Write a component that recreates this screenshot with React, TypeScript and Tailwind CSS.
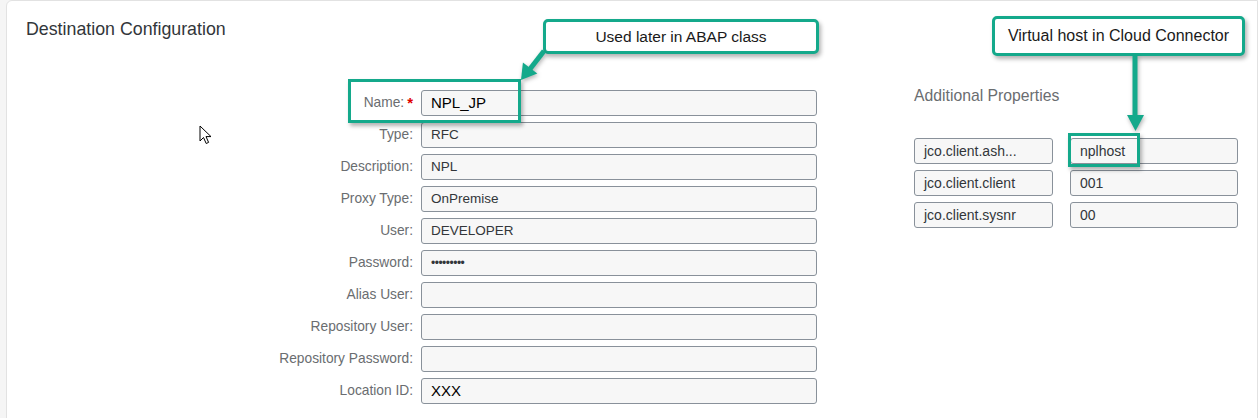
import React from "react";

type Field = {
  label: string;
  value?: string;
  required?: boolean;
  strong?: boolean;
  password?: boolean;
};

const fields: Field[] = [
  { label: "Name:", value: "NPL_JP", required: true, strong: true },
  { label: "Type:", value: "RFC" },
  { label: "Description:", value: "NPL" },
  { label: "Proxy Type:", value: "OnPremise" },
  { label: "User:", value: "DEVELOPER" },
  { label: "Password:", value: "•••••••••", password: true },
  { label: "Alias User:" },
  { label: "Repository User:" },
  { label: "Repository Password:" },
  { label: "Location ID:", value: "XXX", strong: true },
];

const props = [
  { key: "jco.client.ash...", value: "nplhost" },
  { key: "jco.client.client", value: "001" },
  { key: "jco.client.sysnr", value: "00" },
];

const font = { fontFamily: '"Liberation Sans", Arial, sans-serif' };

function Input({ field }: { field: Field }) {
  let textClass = "text-[13.5px] text-[#32363a]";
  if (field.strong) textClass = "text-[15px] text-black";
  if (field.password) textClass = "text-[12px] text-[#32363a] tracking-[-0.5px]";

  return (
    <div className="flex h-[26px] items-center rounded-[3px] border border-[#89919a] bg-[#f7f7f7] px-[9px]">
      <span className={textClass}>{field.value}</span>
    </div>
  );
}

export default function App() {
  return (
    <div
      className="relative h-[418px] w-[1258px] overflow-hidden bg-[#f5f5f5] pl-[6px]"
      style={font}
    >
      {/* Card */}

      <div className="h-[440px] rounded-tl-[6px] border border-[#e2e2e2] bg-white pl-[19px] pt-[16px]">
        <h1 className="text-[17.8px] leading-6 text-[#32363a]">
          Destination Configuration
        </h1>

        <div className="mt-[45px] flex items-start">
          {/* Form */}

          <div className="mt-1 grid grid-cols-[387px_396px] gap-x-2 gap-y-[6px]">
            {fields.map((f) => (
              <React.Fragment key={f.label}>
                <div className="flex h-[26px] items-center justify-end pt-px text-[13.75px] text-[#6a6d70]">
                  {f.label}
                  {f.required && (
                    <span className="ml-[3px] text-[15px] font-bold text-[#e00000]">
                      *
                    </span>
                  )}
                </div>
                <Input field={f} />
              </React.Fragment>
            ))}
          </div>

          {/* Additional properties */}

          <div className="ml-[97px]">
            <h2 className="h-5 text-[15.75px] leading-5 text-[#6a6d70]">
              Additional Properties
            </h2>

            <div className="mt-[32px] grid grid-cols-[139px_168px] gap-x-[17px] gap-y-[6px]">
              {props.map((p) => (
                <React.Fragment key={p.key}>
                  <div className="flex h-[26px] items-center rounded-[3px] border border-[#89919a] bg-[#f7f7f7] px-[9px] text-[14px] text-[#32363a]">
                    {p.key}
                  </div>
                  <div className="flex h-[26px] items-center rounded-[3px] border border-[#89919a] bg-[#f7f7f7] px-[9px] text-[14px] text-[#32363a]">
                    {p.value}
                  </div>
                </React.Fragment>
              ))}
            </div>
          </div>
        </div>
      </div>

      {/* Annotations */}

      <div className="absolute left-[543px] top-[19px] flex h-[35px] w-[276px] items-center justify-center rounded-[5px] border-[3px] border-[#14a98b] bg-white text-[15.5px] text-[#1a1a1a] shadow-[2px_3px_4px_rgba(0,0,0,0.3)]">
        Used later in ABAP class
      </div>

      <div className="absolute left-[992px] top-[16px] flex h-[40px] w-[253px] items-center justify-center rounded-[5px] border-[3px] border-[#14a98b] bg-white text-[16px] text-[#1a1a1a] shadow-[2px_3px_4px_rgba(0,0,0,0.3)]">
        Virtual host in Cloud Connector
      </div>

      <div className="absolute left-[348px] top-[79px] h-[44px] w-[173px] border-[3px] border-[#14a98b] shadow-[2px_3px_4px_rgba(0,0,0,0.3)]" />

      <div className="absolute left-[1068px] top-[133px] h-[34px] w-[72px] border-[3px] border-[#14a98b] shadow-[2px_3px_4px_rgba(0,0,0,0.3)]" />

      <svg
        className="pointer-events-none absolute left-0 top-0"
        width="1258"
        height="418"
        style={{ filter: "drop-shadow(1px 2px 2px rgba(0,0,0,0.3))" }}
      >
        <line x1="544" y1="51" x2="530" y2="69" stroke="#14a98b" strokeWidth="5" />
        <polygon points="521,80 537.3,73.6 522.9,62.6" fill="#14a98b" />
        <line x1="1135" y1="56" x2="1135" y2="116" stroke="#14a98b" strokeWidth="5" />
        <polygon points="1127,115 1144,115 1135.5,131" fill="#14a98b" />
      </svg>

      {/* Mouse cursor */}

      <svg
        className="pointer-events-none absolute left-[199px] top-[125px]"
        width="14"
        height="21"
        viewBox="0 0 14 21"
      >
        <path
          d="M1 1 L1 16 L4.5 12.5 L7.2 18.5 L9.6 17.4 L7 11.6 L12 11.6 Z"
          fill="white"
          stroke="black"
          strokeWidth="1"
          strokeLinejoin="round"
        />
      </svg>
    </div>
  );
}
